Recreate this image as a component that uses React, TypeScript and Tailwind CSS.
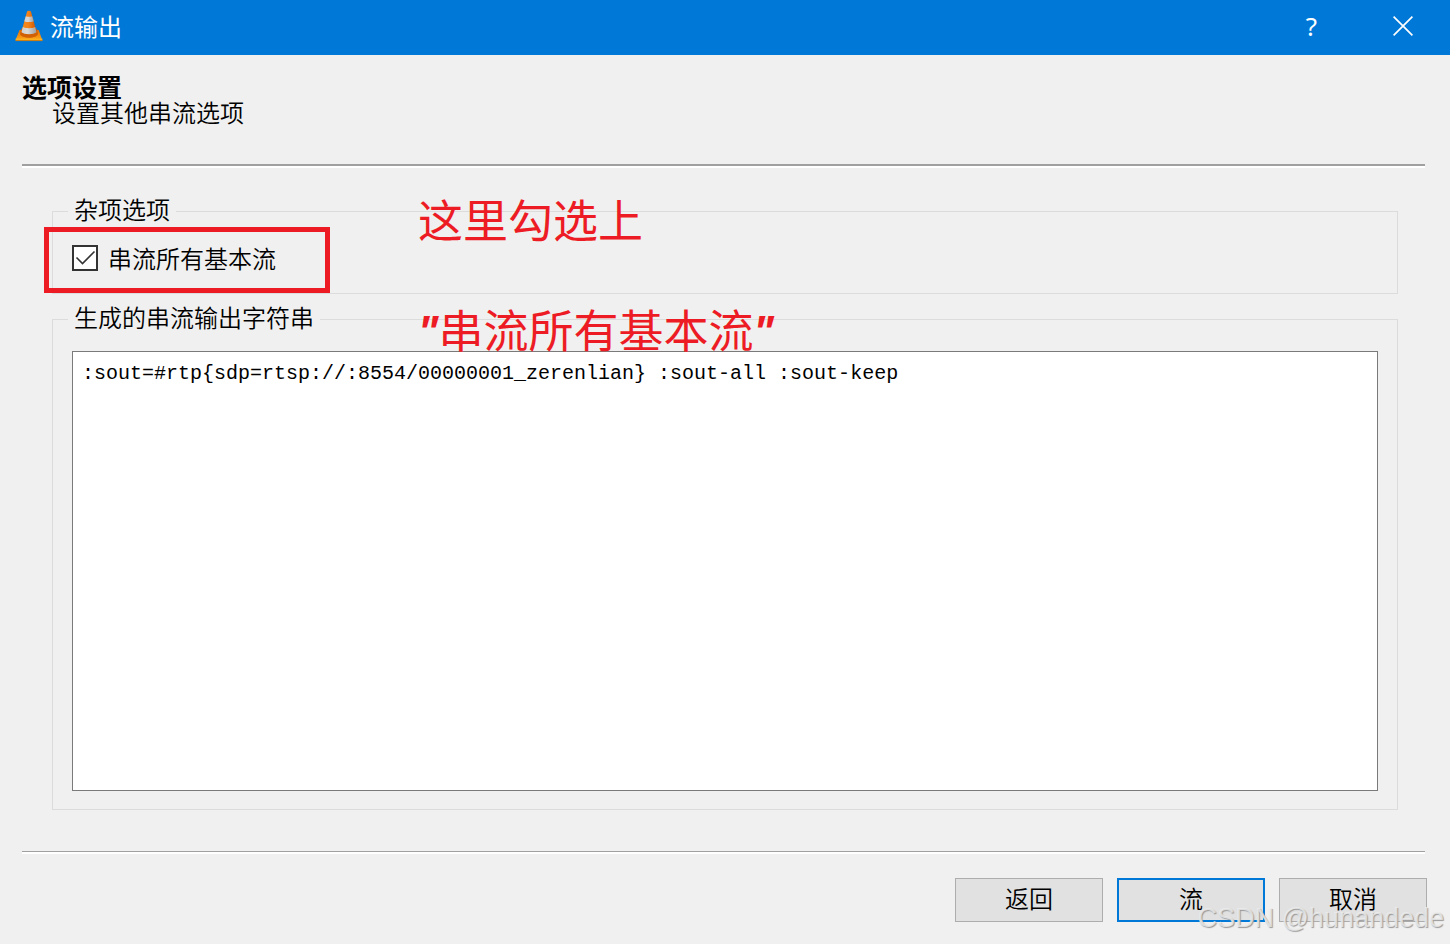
import { useState } from "react";

function ConeIcon() {
  return (
    <svg width="28" height="32" viewBox="0 0 28 32" aria-hidden="true">
      <defs>
        <linearGradient id="orange" x1="0" x2="1">
          <stop offset="0" stopColor="#f58a1c" />
          <stop offset="0.45" stopColor="#f5831a" />
          <stop offset="1" stopColor="#c95400" />
        </linearGradient>
        <linearGradient id="silver" x1="0" x2="1">
          <stop offset="0" stopColor="#cfcfcf" />
          <stop offset="0.4" stopColor="#d8d8d8" />
          <stop offset="1" stopColor="#a0a0a0" />
        </linearGradient>
        <linearGradient id="base" x1="0" x2="0" y1="0" y2="1">
          <stop offset="0" stopColor="#e96d00" />
          <stop offset="1" stopColor="#fba51c" />
        </linearGradient>
      </defs>
      <path d="M4.500 20h19.200l3.300 9.500H.8z" fill="url(#base)" />
      <path d="M.6 28.600h26.800V30.600H.6z" fill="#fbb01f" />
      <path d="M.6 30.200h26.800v.9H.6z" fill="#d77800" />
      <path d="M5 23.500c0 5.600 18 5.600 18 0l-1.500-5h-15z" fill="#d05f06" />
      <path d="M12 1.700c.5-1.200 3.500-1.200 4 0L21.500 21.500c-2 3.400-13 3.400-15 0z" fill="url(#orange)" />
      <path d="M10.800 6.200c1.500.8 4.900.8 6.400 0l1.500 5c-2.200 1.200-7.200 1.200-9.400 0z" fill="url(#silver)" />
      <path d="M7.800 17c3 1.600 9.400 1.600 12.400 0l1.300 5.200c-3 2.600-12 2.600-15 0z" fill="url(#silver)" />
    </svg>
  );
}

function TitleBar() {
  return (
    <header className="flex h-[55px] items-center bg-[#0078d7] pb-1 pl-[15px] pr-0.5 text-white">
      <ConeIcon />
      <span className="ml-[7px] flex-1 text-2xl font-normal">流输出</span>
      <button type="button" aria-label="帮助" className="flex h-full w-[91px] items-center justify-center font-['Noto_Sans',sans-serif] text-[26px] font-normal">
        ?
      </button>
      <button type="button" aria-label="关闭" className="flex h-full w-[91px] items-center justify-center">
        <svg width="20" height="20" viewBox="0 0 20 20" stroke="currentColor" strokeWidth="1.7">
          <path d="M.6.6l18.800 18.800M19.400.6L.6 19.400" />
        </svg>
      </button>
    </header>
  );
}

export default function App() {
  const [streamAll, setStreamAll] = useState(true);
  const [output, setOutput] = useState(
    ":sout=#rtp{sdp=rtsp://:8554/00000001_zerenlian} :sout-all :sout-keep"
  );

  return (
    <div className="relative flex min-h-screen flex-col bg-[#f0f0f0] font-['Noto_Sans_CJK_SC',sans-serif] text-2xl font-[350] leading-6 text-black">
      <TitleBar />

      <div className="flex flex-1 flex-col pb-[22px] pl-[22px] pr-[25px] pt-[18px]">
        <div className="pb-[39px]">
          <h1 className="text-[25px] font-bold leading-[26px]">选项设置</h1>
          <p className="pl-[30px] leading-[26px]">设置其他串流选项</p>
        </div>
        <div className="h-1 border-t-2 border-[#a0a0a0] bg-white" />

        <main className="relative flex flex-1 flex-col gap-[13px] pb-[41px] pl-[30px] pr-[27px] pt-[31px]">
          <fieldset className="border border-[#dcdcdc] px-[15px]">
            <legend className="px-1.5 pb-1 leading-5">杂项选项</legend>
            <div className="flex px-1 py-[22px]">
              <label className="relative flex h-[26px] items-center gap-2.5">
                <input
                  type="checkbox"
                  checked={streamAll}
                  onChange={(e) => setStreamAll(e.target.checked)}
                  className="peer size-[26px] appearance-none border-2 border-[#333] bg-white"
                />
                <svg
                  className="pointer-events-none absolute left-0 top-0 hidden peer-checked:block"
                  width="26"
                  height="26"
                  viewBox="0 0 26 26"
                  fill="none"
                  stroke="#333"
                  strokeWidth="1.6"
                >
                  <path d="M4.500 12.500l6 6L22.500 6.500" />
                </svg>
                串流所有基本流
                {/* Highlight */}
                <span className="pointer-events-none absolute -left-7 -top-[18px] h-[66px] w-[286px] border-5 border-[#ed1c24]" />
              </label>
            </div>
          </fieldset>

          <fieldset className="flex-1 border border-[#dcdcdc] px-[15px] pb-[18px]">
            <legend className="px-1.5 pb-1 leading-5">生成的串流输出字符串</legend>
            <div className="flex px-1 pt-5">
              <textarea
                aria-label="生成的串流输出字符串"
                spellCheck={false}
                value={output}
                onChange={(e) => setOutput(e.target.value)}
                className="h-[calc(100vh-504px)] min-h-24 flex-1 resize-none border border-[#7a7a7a] bg-white px-[9px] py-2.5 font-['Liberation_Mono',monospace] text-xl leading-6 outline-none"
              />
            </div>
          </fieldset>

          {/* Red notes over the form */}
          <div className="pointer-events-none absolute -top-1 left-[396px] whitespace-nowrap text-[45px] font-normal leading-[110px] text-[#ed1c24]">
            <p>这里勾选上</p>
            <p>
              <span className="font-['Noto_Sans',sans-serif] font-bold italic">"</span>
              串流所有基本流
              <span className="font-['Noto_Sans',sans-serif] font-bold italic">"</span>
            </p>
          </div>
        </main>

        <div className="h-[3px] border-t border-[#a0a0a0] bg-white" />
        <div className="-mr-0.5 flex justify-end gap-3.5 pt-6">
          <button type="button" className="h-11 w-[148px] border border-[#adadad] bg-[#e1e1e1] pb-1">
            返回
          </button>
          <button type="button" className="h-11 w-[148px] border-2 border-[#0078d7] bg-[#e1e1e1] pb-1">
            流
          </button>
          <button type="button" className="h-11 w-[148px] border border-[#adadad] bg-[#e1e1e1] pb-1">
            取消
          </button>
        </div>
      </div>

      <span className="pointer-events-none absolute bottom-3 right-1.5 font-['Liberation_Sans',sans-serif] text-[27px] font-normal leading-7 text-[#eeeeee]/80 [text-shadow:1px_1px_1px_#9a9a9a]">
        CSDN @hunandede
      </span>
    </div>
  );
}
